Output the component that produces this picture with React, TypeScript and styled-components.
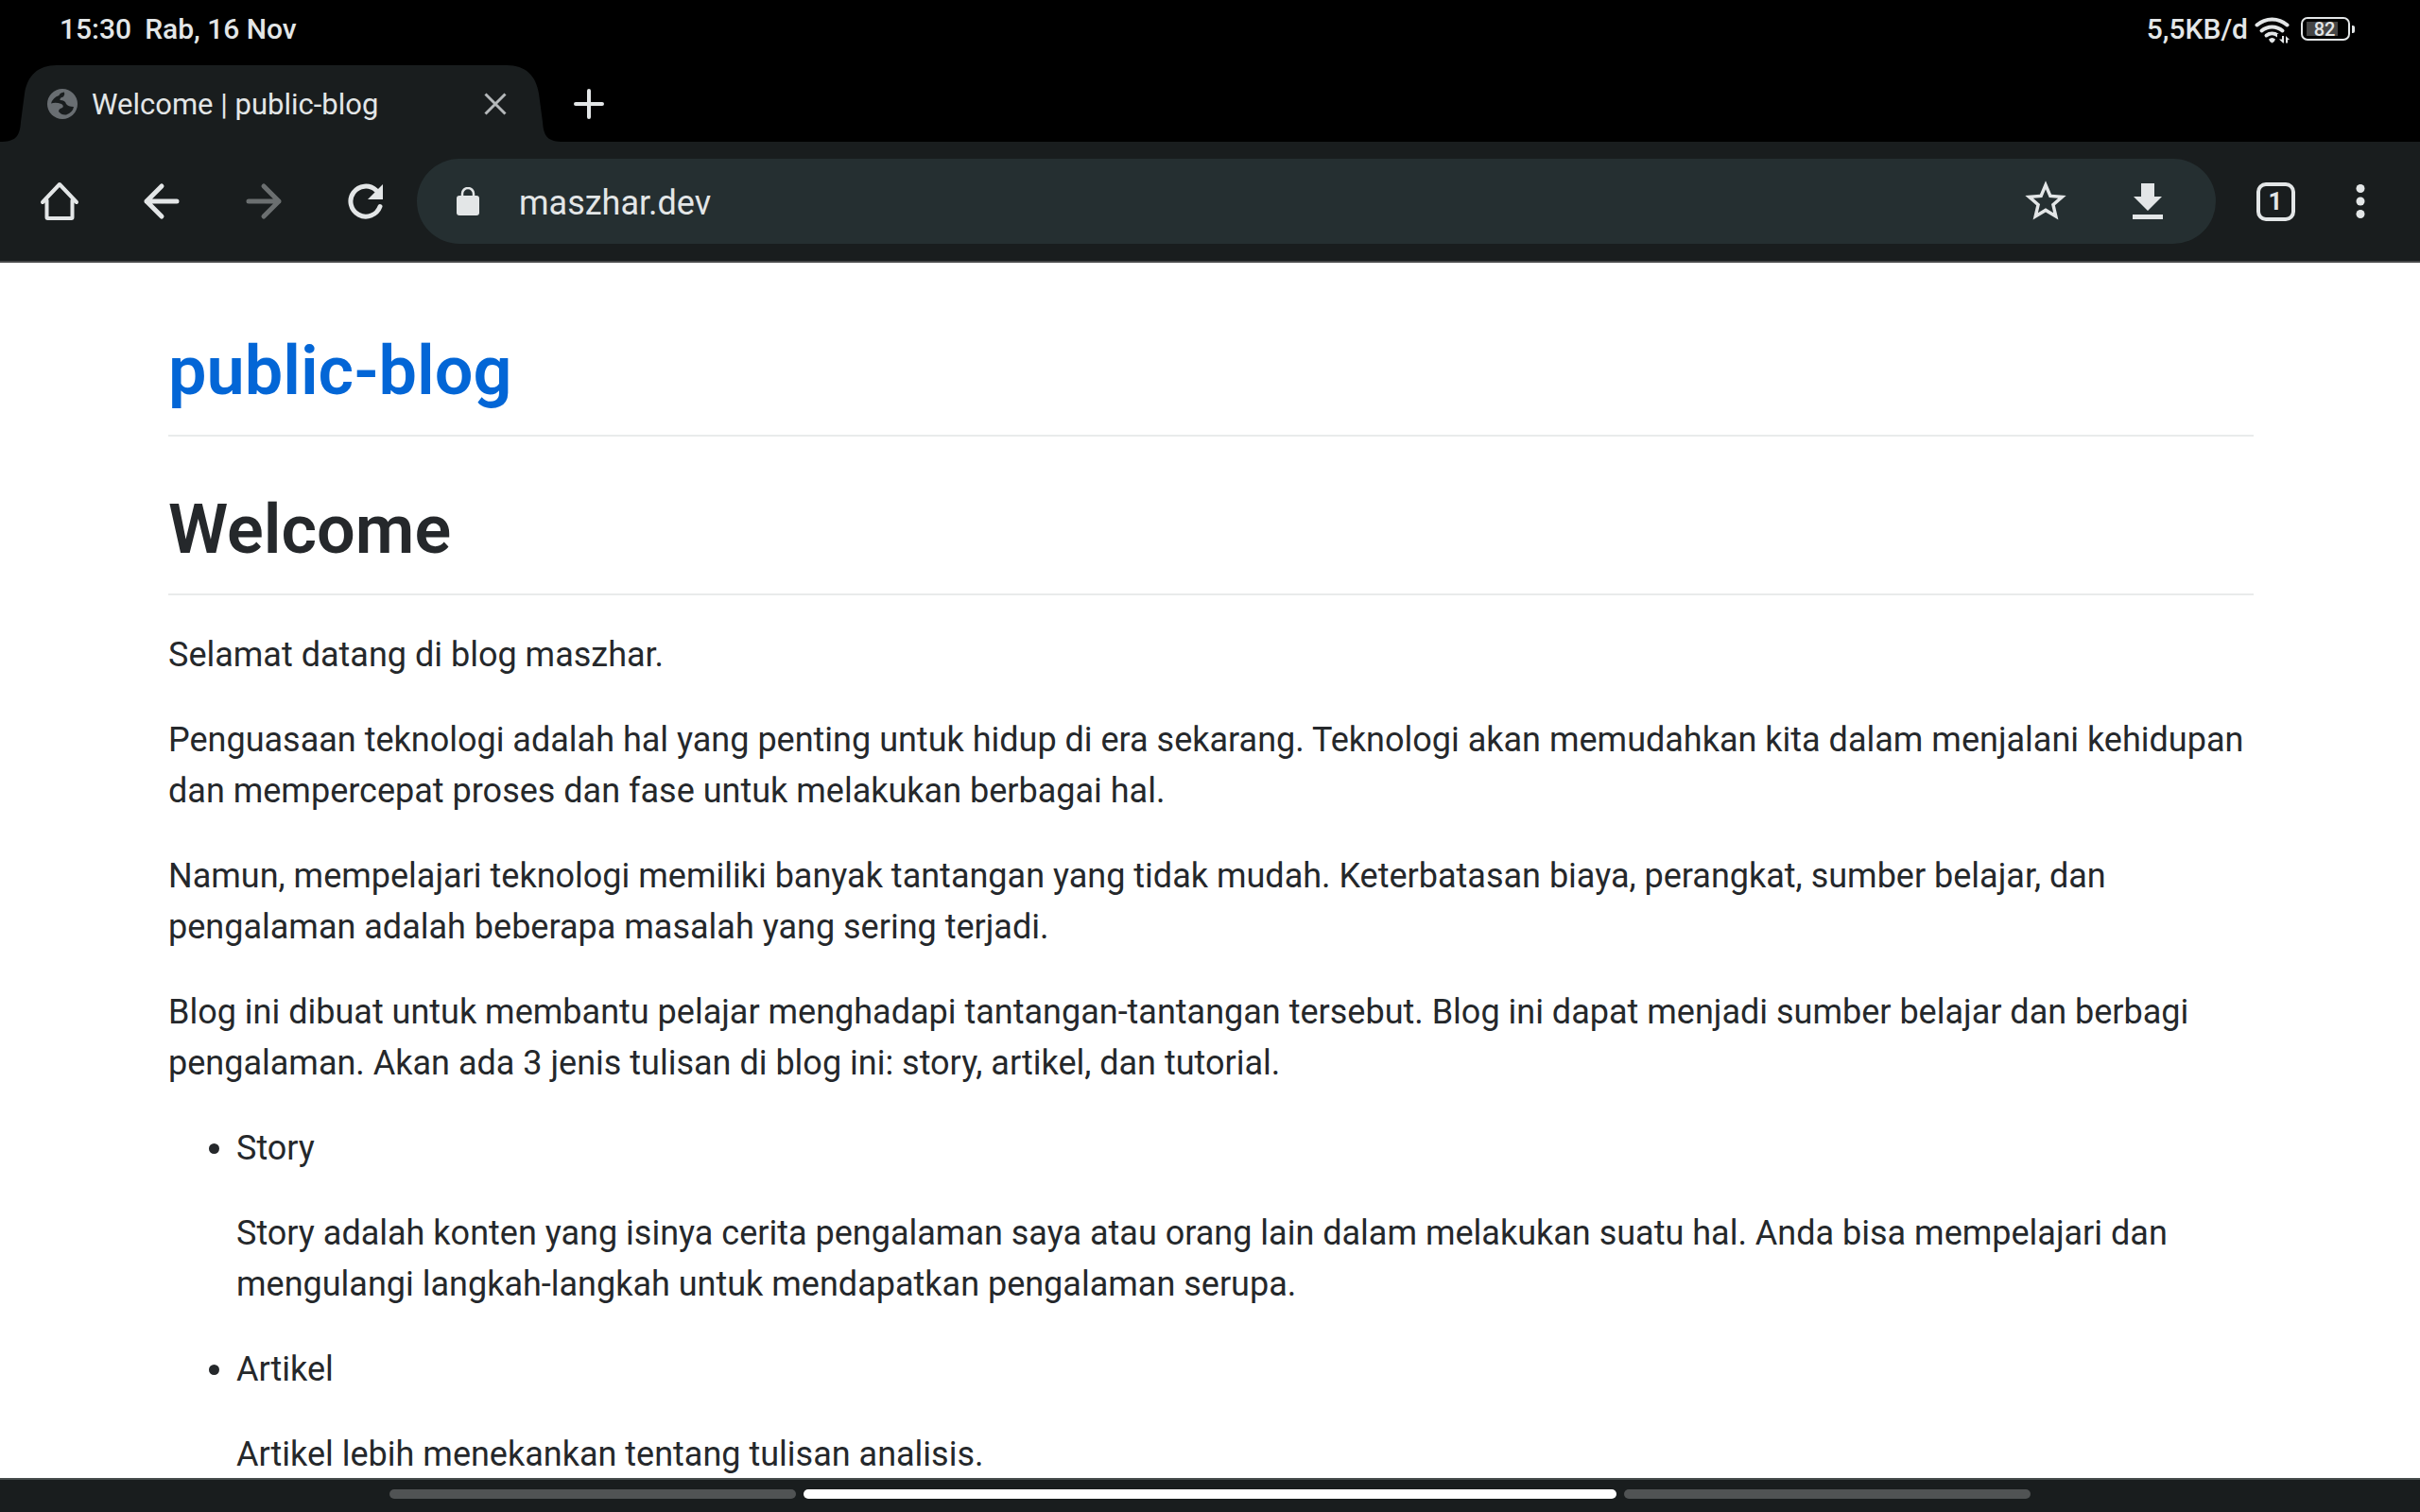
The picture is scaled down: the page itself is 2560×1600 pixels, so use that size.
import React from "react";
import styled, { createGlobalStyle } from "styled-components";

const ink = "#e3e6e7";
const chrome = "#191d1e";

const GlobalStyle = createGlobalStyle`
  * { box-sizing: border-box; }
  html, body, #root { height: 100%; margin: 0; }
  body {
    background: #fff;
    font-family: Roboto, "Noto Sans", sans-serif;
    overflow: hidden;
  }
`;

const Screen = styled.div`
  display: flex;
  flex-direction: column;
  height: 100%;
`;

const StatusBar = styled.header`
  flex: none;
  display: flex;
  align-items: center;
  justify-content: space-between;
  height: 61px;
  padding: 0 69px 0 63px;
  background: #000;
  color: ${ink};
  font-size: 30px;
  font-weight: 500;
  line-height: 36px;
`;

const StatusGroup = styled.div<{ $gap: number }>`
  display: flex;
  align-items: center;
  gap: ${(p) => p.$gap}px;
`;

const BatteryShape = styled.span`
  display: flex;
  align-items: center;
  gap: 2px;
  margin-left: 4px;
`;

const BatteryCase = styled.span`
  display: flex;
  align-items: center;
  justify-content: center;
  width: 52px;
  height: 25px;
  padding-right: 2px;
  border: 2px solid ${ink};
  border-radius: 7px;
  background: linear-gradient(#454545, #454545) 4px center / 33px 15px no-repeat;
  font-size: 20px;
  line-height: 20px;
`;

const BatteryTip = styled.span`
  width: 3px;
  height: 8px;
  border-radius: 0 2px 2px 0;
  background: ${ink};
`;

const TabStrip = styled.div`
  flex: none;
  display: flex;
  align-items: flex-end;
  height: 89px;
  background: #000;
`;

const Tab = styled.div`
  position: relative;
  display: flex;
  align-items: center;
  gap: 15px;
  width: 596px;
  height: 81px;
  padding: 0 39px 0 50px;
  color: ${ink};
  font-size: 31px;
  line-height: 40px;
  isolation: isolate;

  &::before {
    content: "";
    position: absolute;
    z-index: -1;
    inset: 0 59px;
    background: ${chrome};
  }
`;

const TabEdge = styled.svg<{ $right?: boolean }>`
  position: absolute;
  z-index: -1;
  top: 0;
  ${(p) => (p.$right ? "right: 0; transform: scaleX(-1);" : "left: 0;")}
`;

const TabTitle = styled.span`
  flex: 1;
  padding-top: 2px;
  white-space: nowrap;
`;

const IconButton = styled.button<{ $width: number }>`
  flex: none;
  display: flex;
  align-items: center;
  justify-content: center;
  width: ${(p) => p.$width}px;
  height: 81px;
  padding: 0;
  border: 0;
  background: none;
  color: ${ink};

  &:disabled { color: #6b6f70; }
`;

const Toolbar = styled.nav`
  flex: none;
  display: flex;
  align-items: center;
  height: 128px;
  padding: 0 36px 0 9px;
  border-bottom: 2px solid #474849;
  background: ${chrome};
`;

const AddressBar = styled.div`
  flex: 1;
  display: flex;
  align-items: center;
  height: 90px;
  padding-right: 18px;
  border-radius: 45px;
  background: #252f31;
`;

const AddressInput = styled.input`
  flex: 1;
  min-width: 0;
  padding: 4px 0 0;
  border: 0;
  outline: 0;
  background: none;
  color: ${ink};
  font: 400 36px/44px Roboto, "Noto Sans", sans-serif;
`;

const TabCount = styled.span`
  display: flex;
  align-items: center;
  justify-content: center;
  width: 41px;
  height: 41px;
  border: 4px solid ${ink};
  border-radius: 10px;
  font: 700 26px/28px Roboto, "Noto Sans", sans-serif;
`;

const Page = styled.main`
  flex: 1;
  min-height: 0;
  overflow: hidden;
  padding: 70px 176px 0 178px;
  background: #fff;
  color: #25282b;
  font-size: 36px;
  line-height: 54px;
`;

const Heading = styled.h1`
  margin: 0 0 54px;
  padding-bottom: 22px;
  border-bottom: 2px solid #e9ebeb;
  font-size: 72px;
  font-weight: 600;
  line-height: 90px;
`;

const ArticleHeading = styled(Heading)`
  margin-bottom: 36px;
`;

const SiteLink = styled.a`
  color: #0366d6;
  text-decoration: none;
`;

const Paragraph = styled.p`
  margin: 0 0 36px;
`;

const List = styled.ul`
  margin: 0;
  padding-left: 72px;
`;

const GestureBar = styled.footer`
  flex: none;
  display: flex;
  justify-content: center;
  gap: 8px;
  height: 36px;
  padding-top: 10px;
  border-top: 2px solid #474c4c;
  background: ${chrome};
`;

const Handle = styled.span<{ $active?: boolean }>`
  flex: 0 1 ${(p) => (p.$active ? 860 : 430)}px;
  height: 10px;
  border-radius: 5px;
  background: ${(p) => (p.$active ? "#fff" : "#505354")};
`;

const stroke = {
  fill: "none",
  stroke: "currentColor",
  strokeLinecap: "round" as const,
  strokeLinejoin: "round" as const,
};

const tabEdgePath = "M0 81C16 81 21 76 22 60L26 30C29 11 40 0 60 0V81Z";

const sections = [
  {
    title: "Story",
    text: "Story adalah konten yang isinya cerita pengalaman saya atau orang lain dalam melakukan suatu hal. Anda bisa mempelajari dan mengulangi langkah-langkah untuk mendapatkan pengalaman serupa.",
  },
  { title: "Artikel", text: "Artikel lebih menekankan tentang tulisan analisis." },
];

const WifiIcon = () => (
  <svg width="38" height="30" viewBox="0 0 38 30" aria-label="Wi-Fi">
    <g {...stroke} strokeWidth="4">
      <path d="M2.500 10.500A24 24 0 0 1 34.500 10.500" />
      <path d="M7.500 16.500A17 17 0 0 1 29.500 16.500" />
      <path d="M12.500 21.500A10 10 0 0 1 24.500 21.500" />
    </g>
    <path fill="currentColor" d="M15 25.500Q18.500 22.500 22 25.500Q21.500 28 18.500 29.500Q15.500 28 15 25.500Z" />
    <path d="M24 20H38V30H24Z" fill="#000" />
    <path fill="currentColor" d="M29 22H31V29.500H30L26 25.500H29ZM33 22L37 26H35V29.500H33Z" />
  </svg>
);

const GlobeIcon = () => (
  <svg width="32" height="32" viewBox="0 0 32 32" aria-hidden="true">
    <circle cx="16" cy="16" r="16" fill="#696e72" />
    <path
      fill={chrome}
      d="M18 3.500Q13 4 12.500 7Q6 9 4 15.500Q9 14 15 16Q18 18 16 20Q12 21 12 24Q15 28 20 27.500Q27 25 28 19Q22 19 20 16Q19 12 13.500 12Q13 9 17 8.500Q19 6 18 3.500Z"
    />
  </svg>
);

export default function App() {
  return (
    <Screen>
      <GlobalStyle />
      <StatusBar>
        <StatusGroup $gap={14}>
          <span>15:30</span>
          <span>Rab, 16 Nov</span>
        </StatusGroup>
        <StatusGroup $gap={7}>
          <span>5,5KB/d</span>
          <WifiIcon />
          <BatteryShape>
            <BatteryCase>82</BatteryCase>
            <BatteryTip />
          </BatteryShape>
        </StatusGroup>
      </StatusBar>

      <TabStrip>
        <Tab>
          <TabEdge width="60" height="81" viewBox="0 0 60 81" aria-hidden="true">
            <path d={tabEdgePath} fill={chrome} />
          </TabEdge>
          <TabEdge $right width="60" height="81" viewBox="0 0 60 81" aria-hidden="true">
            <path d={tabEdgePath} fill={chrome} />
          </TabEdge>
          <GlobeIcon />
          <TabTitle>Welcome | public-blog</TabTitle>
          <IconButton $width={66} aria-label="Close tab">
            <svg width="24" height="24" viewBox="0 0 24 24" {...stroke} stroke="#b4b8ba" strokeWidth="3" strokeLinecap="butt">
              <path d="M1.500 1.500L22.500 22.500M22.500 1.500L1.500 22.500" />
            </svg>
          </IconButton>
        </Tab>
        <IconButton $width={54} aria-label="New tab">
          <svg width="32" height="32" viewBox="0 0 32 32" {...stroke} strokeWidth="4">
            <path d="M16 2V30M2 16H30" />
          </svg>
        </IconButton>
      </TabStrip>

      <Toolbar>
        <IconButton $width={108} aria-label="Home">
          <svg width="44" height="44" viewBox="0 0 44 44" {...stroke} strokeWidth="4">
            <path d="M4 23L22 4L40 23M8.500 21V39Q8.500 40 9.500 40H34.500Q35.500 40 35.500 39V21" />
          </svg>
        </IconButton>
        <IconButton $width={108} aria-label="Back">
          <svg width="40" height="40" viewBox="0 0 40 40" {...stroke} strokeWidth="5">
            <path d="M36 20H4M20 4L4 20L20 36" />
          </svg>
        </IconButton>
        <IconButton $width={108} aria-label="Forward" disabled>
          <svg width="40" height="40" viewBox="0 0 40 40" {...stroke} strokeWidth="5">
            <path d="M4 20H36M20 4L36 20L20 36" />
          </svg>
        </IconButton>
        <IconButton $width={108} aria-label="Reload">
          <svg width="40" height="40" viewBox="0 0 40 40">
            <path d="M35 25.500A16 16 0 1 1 31 8.500" {...stroke} strokeWidth="5" />
            <path d="M38 2V18H22Z" fill="currentColor" />
          </svg>
        </IconButton>
        <AddressBar>
          <IconButton $width={108} aria-label="Site information">
            <svg width="24" height="30" viewBox="0 0 24 30">
              <path d="M6 11V7A6 6 0 0 1 18 7V11" {...stroke} strokeWidth="2.500" />
              <rect y="9" width="24" height="21" rx="3" fill="currentColor" />
            </svg>
          </IconButton>
          <AddressInput aria-label="Address" defaultValue="maszhar.dev" />
          <IconButton $width={108} aria-label="Bookmark">
            <svg width="52" height="52" viewBox="0 0 24 24" fill="currentColor">
              <path d="M22 9.240l-7.190-.62L12 2 9.190 8.630 2 9.240l5.460 4.730L5.820 21 12 17.270 18.180 21l-1.630-7.030L22 9.240zM12 15.400l-3.760 2.270 1-4.280-3.320-2.880 4.380-.38L12 6.100l1.710 4.040 4.380.38-3.320 2.880 1 4.280L12 15.400z" />
            </svg>
          </IconButton>
          <IconButton $width={108} aria-label="Download">
            <svg width="32" height="38" viewBox="0 0 32 38" fill="currentColor">
              <path d="M9 0H23V14H31L16 29L1 14H9ZM0 33H32V38H0Z" />
            </svg>
          </IconButton>
        </AddressBar>
        <IconButton $width={126} aria-label="Open tabs">
          <TabCount>1</TabCount>
        </IconButton>
        <IconButton $width={54} aria-label="Menu">
          <svg width="10" height="36" viewBox="0 0 10 36" fill="currentColor">
            <circle cx="5" cy="4.500" r="4.500" />
            <circle cx="5" cy="18" r="4.500" />
            <circle cx="5" cy="31.500" r="4.500" />
          </svg>
        </IconButton>
      </Toolbar>

      <Page>
        <Heading>
          <SiteLink href="#">public-blog</SiteLink>
        </Heading>
        <ArticleHeading>Welcome</ArticleHeading>
        <Paragraph>Selamat datang di blog maszhar.</Paragraph>
        <Paragraph>
          Penguasaan teknologi adalah hal yang penting untuk hidup di era sekarang. Teknologi akan memudahkan kita dalam
          menjalani kehidupan dan mempercepat proses dan fase untuk melakukan berbagai hal.
        </Paragraph>
        <Paragraph>
          Namun, mempelajari teknologi memiliki banyak tantangan yang tidak mudah. Keterbatasan biaya, perangkat, sumber
          belajar, dan pengalaman adalah beberapa masalah yang sering terjadi.
        </Paragraph>
        <Paragraph>
          Blog ini dibuat untuk membantu pelajar menghadapi tantangan-tantangan tersebut. Blog ini dapat menjadi sumber
          belajar dan berbagi pengalaman. Akan ada 3 jenis tulisan di blog ini: story, artikel, dan tutorial.
        </Paragraph>
        <List>
          {sections.map((s) => (
            <li key={s.title}>
              <Paragraph>{s.title}</Paragraph>
              <Paragraph>{s.text}</Paragraph>
            </li>
          ))}
        </List>
      </Page>

      <GestureBar>
        <Handle />
        <Handle $active />
        <Handle />
      </GestureBar>
    </Screen>
  );
}
